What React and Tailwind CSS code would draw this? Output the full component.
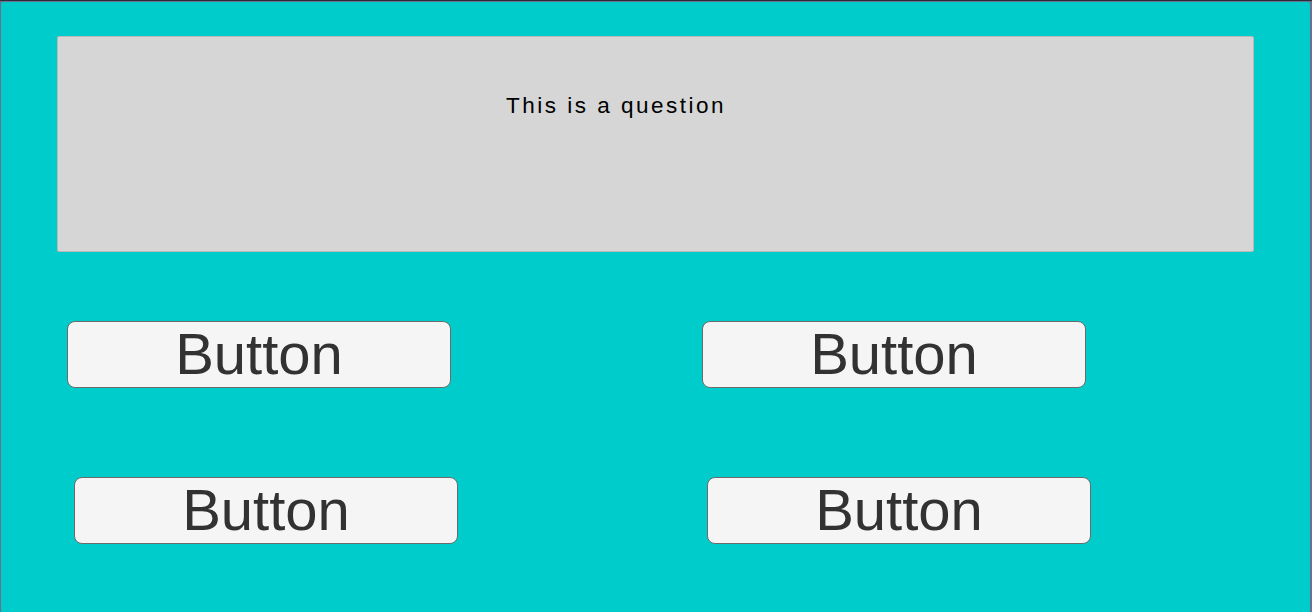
function QuizButton({ className }) {
  return (
    <button
      className={`w-[384px] h-[67px] rounded-[8px] border border-[#6b6b6b] bg-[#f5f5f5] text-[#323232] text-[58px] leading-none flex items-center justify-center pb-[1px] ${className}`}
    >
      Button
    </button>
  )
}

export default function App() {
  return (
    <div
      className="w-[1312px] h-[612px] bg-[#2b2e38] pt-[1px] overflow-hidden"
      style={{ fontFamily: '"Liberation Sans", Arial, sans-serif' }}
    >
      <div className="h-[611px] bg-[#6b7090] pt-[1px] pl-[1px] pr-[2px]">
        <div className="h-full bg-[#00cccc] rounded-tl-[2px] rounded-tr-[2px] pt-[34px]">
          {/* question panel */}
          <div className="ml-[56px] w-[1197px] h-[216px] bg-[#d6d6d6] border border-[#b9b9b9] rounded-[2px] pt-[55px] pl-[448px]">
            <p className="text-[22.5px] leading-[28px] tracking-[2.5px] text-black">This is a question</p>
          </div>

          <div className="mt-[69px] flex">
            <QuizButton className="ml-[66px]" />
            <QuizButton className="ml-[251px]" />
          </div>
          <div className="mt-[89px] flex">
            <QuizButton className="ml-[73px]" />
            <QuizButton className="ml-[249px]" />
          </div>
        </div>
      </div>
    </div>
  )
}
